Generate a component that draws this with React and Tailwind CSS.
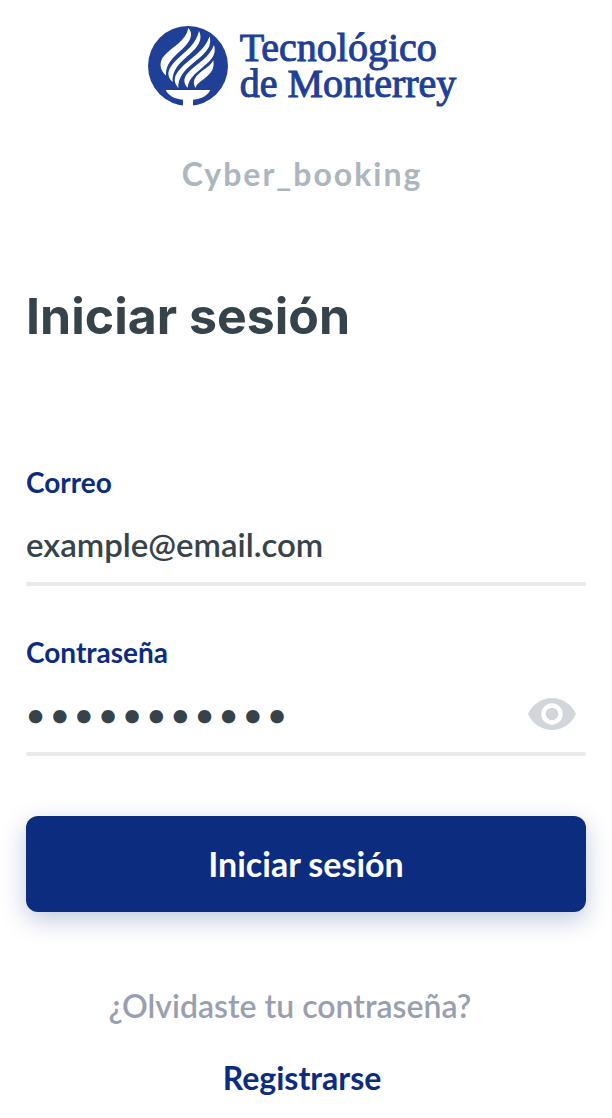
import { useState } from "react";

function Emblem() {
  return (
    <svg viewBox="0 0 240 240" className="size-20 shrink-0" aria-hidden="true">
      <circle cx="120" cy="120" r="120" fill="#203f97" />
      <g fill="#fff">
        <path d="M121 6C134 20 132 38 112 60C88 86 52 106 54 149C34 132 32 106 50 88C78 58 114 44 121 6Z" />
        <path d="M153 15C163 35 156 54 134 76C106 104 72 124 74 168C56 152 57 134 76 112C102 82 142 62 153 15Z" />
        <path d="M185 31C190 54 184 68 163 88C134 116 90 138 91 186C74 166 78 148 97 128C127 96 168 78 185 31Z" />
        <path d="M198 57C204 77 198 93 181 109C151 137 121 154 119 185C103 168 107 151 126 134C152 110 184 94 198 57Z" />
        <path d="M196 103C200 126 191 140 174 154C156 169 145 174 143 186C132 169 139 154 155 141C171 127 187 121 196 103Z" />
        <path d="M53 192H187C180 207 163 219 135 221V244H105V221C77 219 60 207 53 192Z" />
      </g>
    </svg>
  );
}

const label = "block text-[28px] leading-8 font-bold text-[#0c2c80]";
const field =
  "block bg-transparent text-[33px] leading-10 font-semibold text-[#37434a] placeholder:text-[#37434a] outline-none";

export default function App() {
  const [shown, setShown] = useState(false);
  return (
    <main className="min-h-screen bg-white px-[26px] pt-[26px] pb-5 font-['Lato',sans-serif]">
      <header className="flex flex-col items-center pr-2">
        <div className="flex items-start gap-3">
          <Emblem />
          <p className="pt-1 font-['Liberation_Serif',serif] text-[40px] leading-9 whitespace-nowrap text-[#203f97] [-webkit-text-stroke:1px_#203f97]">
            Tecnológico
            <br />
            de Monterrey
          </p>
        </div>
        <p className="mt-12 text-[32px] leading-10 font-bold tracking-[2px] text-[#adb5bd]">
          Cyber_booking
        </p>
      </header>

      <h1 className="mt-[90px] font-['Inter',sans-serif] text-[50px] leading-[64px] font-bold text-[#37434a]">
        Iniciar sesión
      </h1>

      <form onSubmit={(e) => e.preventDefault()}>
        <div className="mt-[118px]">
          <label htmlFor="email" className={label}>
            Correo
          </label>
          <input
            id="email"
            type="email"
            placeholder="example@email.com"
            className={`mt-[26px] w-full ${field}`}
          />
          <div className="mt-[18px] h-1 rounded-full bg-[#e9e9e9]" />
        </div>

        <div className="mt-[50px]">
          <label htmlFor="password" className={label}>
            Contraseña
          </label>
          <div className="mt-[26px] flex items-center">
            <input
              id="password"
              type={shown ? "text" : "password"}
              defaultValue="contrasena1"
              className={`min-w-0 flex-1 tracking-[5px] ${field}`}
            />
            <button
              type="button"
              aria-label="Mostrar contraseña"
              onClick={() => setShown(!shown)}
              className="mr-[10px] shrink-0"
            >
              <svg viewBox="0 0 48 32" className="block h-8 w-12" aria-hidden="true">
                <path
                  d="M24 0C13 0 4 7 0 16C4 25 13 32 24 32S44 25 48 16C44 7 35 0 24 0Z"
                  fill="#d2d6db"
                />
                <circle cx="24" cy="16" r="8.5" fill="#d2d6db" stroke="#fff" strokeWidth="4.5" />
              </svg>
            </button>
          </div>
          <div className="mt-[18px] h-1 rounded-full bg-[#e9e9e9]" />
        </div>

        <button
          type="submit"
          className="mt-[60px] h-24 w-full rounded-xl bg-[#0c2c80] text-[34px] leading-10 font-bold text-white shadow-[0_8px_24px_rgba(12,44,128,0.25)]"
        >
          Iniciar sesión
        </button>
      </form>

      <nav className="mt-[74px] flex flex-col items-center gap-8 pr-2 text-[32px] leading-10">
        <a href="#recuperar" className="pr-6 font-semibold text-[#9a9fb0]">
          ¿Olvidaste tu contraseña?
        </a>
        <a href="#registro" className="font-bold text-[#0c2c80]">
          Registrarse
        </a>
      </nav>
    </main>
  );
}
